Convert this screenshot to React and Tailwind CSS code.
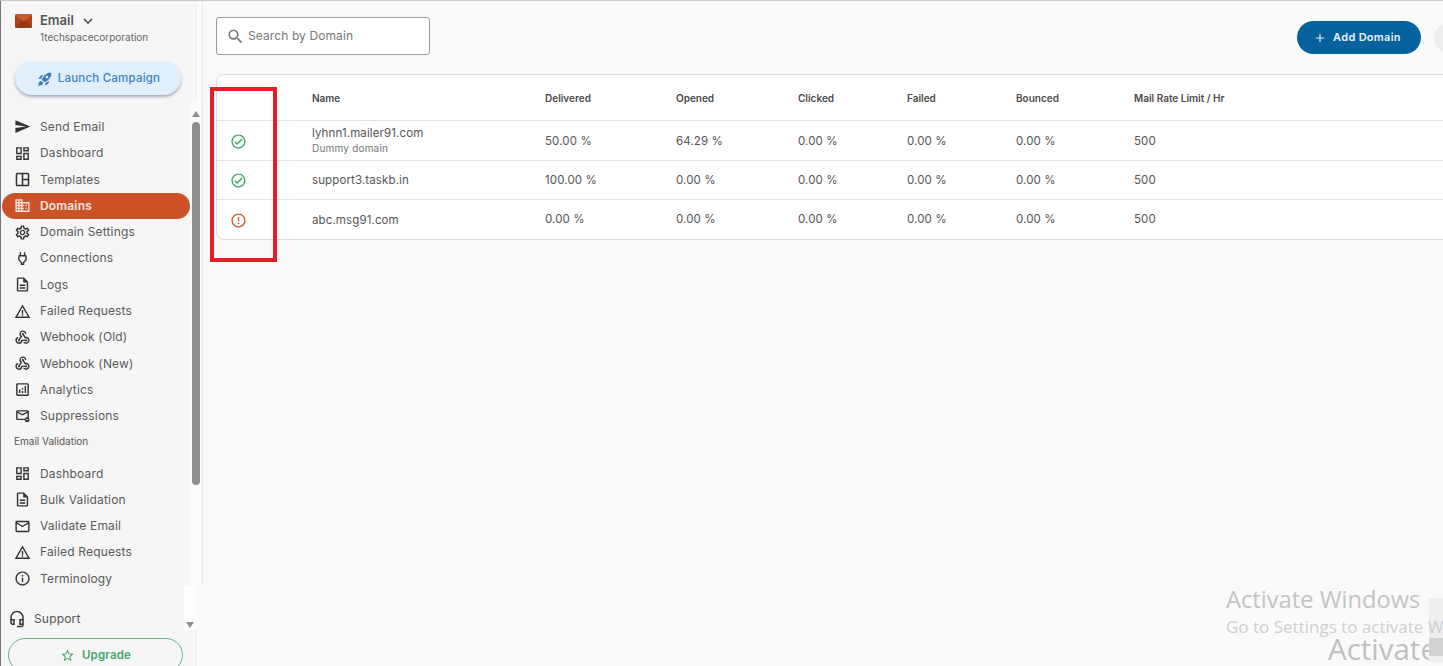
import React from "react";
import {
  MdSend, MdOutlineDashboard, MdDomain, MdOutlineSettings,
  MdOutlinePower, MdOutlineDescription, MdWarningAmber, MdOutlineWebhook, MdOutlineAnalytics,
  MdOutlineUnsubscribe, MdMailOutline, MdInfoOutline, MdOutlineHeadsetMic,
  MdStarBorder, MdRocketLaunch, MdKeyboardArrowDown, MdSearch, MdOutlineCheckCircle,
  MdErrorOutline, MdAdd,
} from "react-icons/md";

function MosaicIcon({ className }) {
  return (
    <svg viewBox="0 0 24 24" fill="none" stroke="currentColor" strokeWidth="2.2" className={className}>
      <rect x="3.5" y="3.5" width="17" height="17" rx="1.5" />
      <path d="M12 3.5v17M12 12h8.5" />
    </svg>
  );
}

function EnvelopeLogo() {
  return (
    <svg viewBox="0 0 17 14" className="h-[14px] w-[17px] shrink-0">
      <rect x="0" y="0" width="17" height="14" rx="1.5" fill="#ad421c" />
      <path d="M0 1.5 8.5 8 17 1.5V1.5Q17 0 15.5 0H1.5Q0 0 0 1.5z" fill="#c9592f" />
      <path d="M.4 13.6 6.5 6.5 8.5 8l2-1.5 6.1 7.1z" fill="#963814" />
    </svg>
  );
}

const nav1 = [
  [MdSend, "Send Email"],
  [MdOutlineDashboard, "Dashboard"],
  [MosaicIcon, "Templates"],
  [MdDomain, "Domains", true],
  [MdOutlineSettings, "Domain Settings"],
  [MdOutlinePower, "Connections"],
  [MdOutlineDescription, "Logs"],
  [MdWarningAmber, "Failed Requests"],
  [MdOutlineWebhook, "Webhook (Old)"],
  [MdOutlineWebhook, "Webhook (New)"],
  [MdOutlineAnalytics, "Analytics"],
  [MdOutlineUnsubscribe, "Suppressions"],
];
const nav2 = [
  [MdOutlineDashboard, "Dashboard"],
  [MdOutlineDescription, "Bulk Validation"],
  [MdMailOutline, "Validate Email"],
  [MdWarningAmber, "Failed Requests"],
  [MdInfoOutline, "Terminology"],
];
const rows = [
  { ok: true, name: "lyhnn1.mailer91.com", sub: "Dummy domain", v: ["50.00 %", "64.29 %", "0.00 %", "0.00 %", "0.00 %", "500"], h: "h-[39.7px] pt-[3px]" },
  { ok: true, name: "support3.taskb.in", v: ["100.00 %", "0.00 %", "0.00 %", "0.00 %", "0.00 %", "500"], h: "h-[39.4px] pt-[1px]" },
  { ok: false, name: "abc.msg91.com", v: ["0.00 %", "0.00 %", "0.00 %", "0.00 %", "0.00 %", "500"], h: "h-[39px] pt-[1px]" },
];
const cols = "grid grid-cols-[95px_233px_131px_122px_109px_109px_118px_300px] items-center";

function NavItem({ icon: Icon, label, active }) {
  return (
    <div className={`flex h-[26.3px] items-center ${active ? "ml-[1px] rounded-full bg-[#cd5227] text-[#f4e6e0] font-semibold" : "text-[#5a5a5a]"}`}>
      <Icon className={`mr-[9px] h-[17px] w-[17px] shrink-0 ${active ? "ml-[12px] text-[#f4e0d8]" : "ml-[13px] text-[#333333]"}`} />
      <span>{label}</span>
    </div>
  );
}

export default function App() {
  return (
    <div className="relative flex h-[666px] w-[1443px] overflow-hidden border-t border-[#c9c9c9] bg-[#fafafa] text-[12px] tracking-[0.17px] font-['Inter',sans-serif]">
      <aside className="flex w-[197px] shrink-0 flex-col border-l border-[#777777] border-r border-r-[#ededed] bg-[#f6f6f6]">
        <div className="flex items-center pl-[14px] pt-[10px]">
          <EnvelopeLogo />
          <span className="ml-[8px] text-[13px] font-semibold text-[#555555] tracking-normal">Email</span>
          <MdKeyboardArrowDown className="ml-[5px] h-[18px] w-[18px] text-[#444444]" />
        </div>
        <div className="-mt-[1px] pl-[39px] text-[10px] tracking-normal leading-[14px] text-[#666666]">1techspacecorporation</div>
        <div className="ml-[14px] mt-[17.5px] flex h-[34px] w-[166px] shrink-0 items-center justify-center rounded-full bg-[#e1effb] pt-[2px] pl-[1px] text-[11.5px] tracking-[0.2px] font-medium text-[#3a82c0] shadow-[0_2px_3px_rgba(70,90,130,0.45)]">
          <MdRocketLaunch className="mr-[5px] h-4 w-4 text-[#3a7fbd]" />
          Launch Campaign
        </div>
        <div className="relative mt-[18.8px] w-[189px] shrink-0">
          {nav1.map(([I, l, a]) => (
            <NavItem key={l} icon={I} label={l} active={a} />
          ))}
          <div className="flex h-[24px] items-center pl-[13px] text-[10px] tracking-normal text-[#555555]">Email Validation</div>
          <div className="h-[7px]" />
          {nav2.map(([I, l]) => (
            <NavItem key={l} icon={I} label={l} />
          ))}
        </div>
        <div className="mt-[14px] flex h-[26px] shrink-0 items-center pl-[7px] text-[#555555]">
          <MdOutlineHeadsetMic className="mr-[8px] h-[18px] w-[18px] text-[#333333]" />
          Support
        </div>
        <div className="ml-[7px] mt-[6px] flex h-[34px] w-[175px] shrink-0 items-center justify-center rounded-full border border-[#63b98a] pt-[1px] text-[11.5px] font-semibold text-[#45a56f]">
          <MdStarBorder className="mr-[7px] h-[15px] w-[15px]" />
          Upgrade
        </div>
      </aside>
      <div className="h-[584px] w-[6px] shrink-0 border-r border-[#e8e8e8] bg-[#fafafa]" />

      <main className="min-w-0 flex-1 pl-[13px]">
        <div className="flex h-[73px] items-start justify-between">
          <div className="mt-[16px] flex h-[38px] w-[214px] items-center rounded-[3px] border border-[#9a9a9a] bg-white pl-[9px] tracking-[0.1px] text-[#777777]">
            <MdSearch className="mr-[3px] h-[19px] w-[19px] text-[#777777]" />
            Search by Domain
          </div>
          <div className="mt-[20px] flex items-center">
            <div className="flex h-[33px] w-[124px] items-center justify-center rounded-full bg-[#05629f] pr-[4px] text-[11px] tracking-[0.3px] font-semibold text-[#e8f0f6]">
              <MdAdd className="mr-[6px] h-[14px] w-[14px]" />
              Add Domain
            </div>
            <div className="ml-[13px] mr-[-21px] h-[30px] w-[30px] rounded-full bg-[#eeeeee]" />
          </div>
        </div>
        <div className="w-[1300px] rounded-[8px] border border-[#dddddd] bg-white text-[11.5px] tracking-[0.12px] text-[#555555]">
          <div className={`${cols} h-[46px] border-b border-[#e3e3e3] pt-[1px] text-[10px] font-semibold text-[#4a4a4a] tracking-normal`}>
            <div />
            <div>Name</div>
            <div>Delivered</div>
            <div>Opened</div>
            <div>Clicked</div>
            <div>Failed</div>
            <div>Bounced</div>
            <div>Mail Rate Limit / Hr</div>
          </div>
          {rows.map((r, i) => (
            <div key={r.name} className={`${cols} ${r.h} ${i < 2 ? "border-b border-[#e3e3e3]" : ""}`}>
              <div className="pl-[13px]">
                {r.ok ? (
                  <MdOutlineCheckCircle className="h-[17px] w-[17px] text-[#3fa86d]" />
                ) : (
                  <MdErrorOutline className="h-[17px] w-[17px] text-[#cf5a36]" />
                )}
              </div>
              <div className={r.sub ? "-mt-[1px]" : ""}>
                <div className="leading-[15px]">{r.name}</div>
                {r.sub && <div className="text-[10px] leading-[15px] tracking-[0.2px] text-[#777777]">{r.sub}</div>}
              </div>
              {r.v.map((x, j) => (
                <div key={j}>{x}</div>
              ))}
            </div>
          ))}
        </div>
      </main>

      <div className="absolute left-[210px] top-[86px] h-[175px] w-[67px] border-[4px] border-[#e71c25]" />
      <div className="absolute left-[190px] top-[100px] h-[484px] w-[12px] bg-[#fbfbfb]" />
      <div className="absolute left-[184px] top-[584px] h-[45px] w-[13px] bg-[#fdfdfd]" />
      <div className="absolute left-[192px] top-[121px] h-[363px] w-[8px] rounded-full bg-[#8e8e8e]" />
      <div className="absolute left-[192px] top-[110px] h-0 w-0 border-x-[4px] border-b-[6px] border-x-transparent border-b-[#8e8e8e]" />
      <div className="absolute left-[186px] top-[621px] h-0 w-0 border-x-[4px] border-t-[6px] border-x-transparent border-t-[#8e8e8e]" />
      <div className="absolute left-[1226px] top-[584px] font-['Open_Sans',sans-serif] text-[23.7px] leading-[28px] tracking-normal text-[#c4c4c4] whitespace-nowrap">Activate Windows</div>
      <div className="absolute left-[1328px] top-[631px] font-['Open_Sans',sans-serif] text-[29.5px] leading-[34px] tracking-normal text-[#c0c0c0] whitespace-nowrap">Activate Windows</div>
      <div className="absolute left-[1429px] top-[597px] h-[64px] w-[14px] bg-[#eeeeee]" />
      <div className="absolute left-[1429px] top-[637px] h-[18px] w-[14px] bg-[#d2d2d2]" />
      <div className="absolute left-[1226px] top-[616px] font-['Open_Sans',sans-serif] text-[17px] leading-[20px] tracking-normal text-[#cfcfcf] whitespace-nowrap">Go to Settings to activate Windows.</div>
    </div>
  );
}
